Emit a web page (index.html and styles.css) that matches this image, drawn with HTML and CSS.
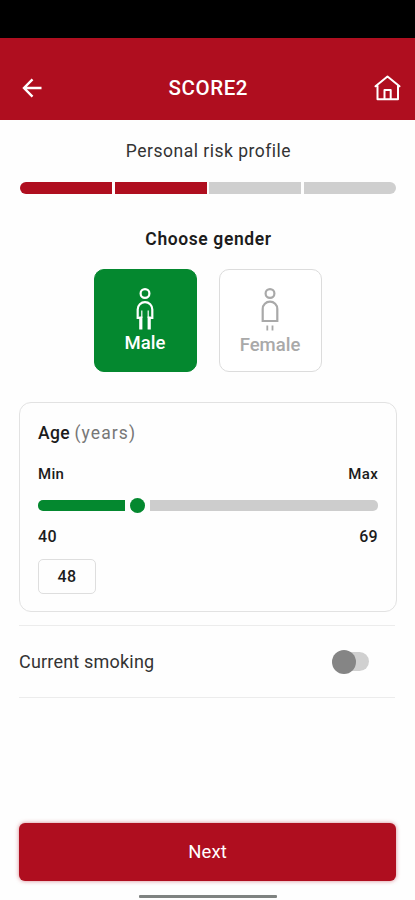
FILE: index.html
```html
<!DOCTYPE html>
<html lang="en">
<head>
<meta charset="utf-8">
<title>SCORE2</title>
<link rel="stylesheet" href="styles.css">
</head>
<body>
<div class="status"></div>
<header class="header">
  <svg class="back" width="22" height="22" viewBox="0 0 22 22" fill="none" stroke="#fff" stroke-width="2.400"><path d="M20.500 11H4M11.500 2.300L3 11l8.500 8.700"/></svg>
  <h1 class="title"><span class="t-title">SCORE2</span></h1>
  <svg class="home" width="28" height="28" viewBox="0 0 28 28" fill="none" stroke="#fff" stroke-width="2" stroke-linejoin="round" stroke-linecap="round"><path d="M2.500 12.300L14.500 2.500l12 9.800M4.500 11.500V25.300H25V11.500M11.500 25V16h6.200V25"/></svg>
</header>
<main class="main">
  <p class="subtitle"><span class="t-sub">Personal risk profile</span></p>
  <div class="progress"><i class="done"></i><i class="done"></i><i></i><i></i></div>
  <h2 class="choose"><span class="t-choose">Choose gender</span></h2>
  <div class="genders">
    <button class="tile selected">
      <svg width="20" height="44" viewBox="0 0 20 44" fill="none" stroke="currentColor" stroke-width="2.200"><circle cx="10" cy="5.500" r="4.400"/><path d="M5.500 30H2.700V21.500a7.300 7.300 0 0 1 14.600 0V30H14.500"/><path d="M5.800 28.500V41.500M14.200 28.500V41.500" stroke-width="3.200"/><path d="M6.800 22.500V30M13.200 22.500V30" stroke-width="1.200"/></svg>
      <span class="t-male">Male</span>
    </button>
    <button class="tile">
      <svg width="20" height="44" viewBox="0 0 20 44" fill="none" stroke="currentColor" stroke-width="2.200"><circle cx="10" cy="5.500" r="4.400"/><path d="M2.700 33V21a7.300 7.300 0 0 1 14.600 0V33Z"/><path d="M7.300 37.500v5M12.500 37.500v5" stroke-width="1.800"/></svg>
      <span class="t-female">Female</span>
    </button>
  </div>
  <section class="card">
    <h3 class="age"><span class="t-age">Age</span> <span class="t-years">(years)</span></h3>
    <div class="row labels"><span class="t-min">Min</span><span class="t-max">Max</span></div>
    <div class="slider"><i class="fill"></i><i class="thumb"></i><i class="rest"></i></div>
    <div class="row values"><span class="t-num">40</span><span class="t-num">69</span></div>
    <div class="value"><span class="t-num">48</span></div>
  </section>
  <div class="smoking">
    <span class="t-smoking">Current smoking</span>
    <div class="toggle"><i class="knob"></i></div>
  </div>
</main>
<footer class="footer">
  <button class="next"><span class="t-next">Next</span></button>
  <div class="homebar"></div>
</footer>
</body>
</html>
```
FILE: styles.css
```css
* { box-sizing: border-box; margin: 0; padding: 0; }
body {
  display: flex; flex-direction: column; height: 900px; overflow: hidden;
  background: #fefefe; color: #1c1c1c; font-family: Roboto, "Liberation Sans", sans-serif;
}
button { font-family: inherit; border: 0; }
.status { height: 37.500px; background: #000; }
.header {
  height: 82.500px; padding: 18px 14px 0 20.500px; background: #af0e1f; color: #fff;
  display: grid; grid-template-columns: 28px 1fr 28px; align-items: center;
}
.title { text-align: center; font-size: 20.500px; line-height: 24px; font-weight: 500; padding-right: 5px; }
.main { padding: 19px 19px 0; }
.subtitle { height: 24px; line-height: 24px; padding-left: 2px; text-align: center; font-size: 17.500px; color: #333; }
.progress { display: flex; gap: 2.500px; height: 12px; margin: 19px 0 0 1px; border-radius: 6px; overflow: hidden; }
.progress i { flex: 1; background: #cfcfcf; }
.progress .done { background: #af0e1f; }
.choose { height: 24px; margin-top: 33px; padding-left: 2px; line-height: 24px; text-align: center; font-size: 17.500px; font-weight: 600; }
.genders { display: flex; justify-content: center; gap: 22px; margin-top: 18px; }
.tile {
  width: 103px; height: 103px; padding-top: 18px; border: 1px solid #dcdcdc; border-radius: 10px;
  background: #fff; color: #a9a9a9; display: flex; flex-direction: column; align-items: center;
  font-size: 18.500px; line-height: 22px; font-weight: 500;
}
.tile span { margin-top: 2px; }
.tile.selected { background: #04882f; border-color: #04882f; color: #fff; }
.tile.selected span { margin-top: 0; }
.card { height: 210px; margin: 30px -1px 0 0; padding: 19px 18px 0; border: 1.500px solid #e2e2e2; border-radius: 12px; }
.age { font-size: 17.500px; line-height: 22px; font-weight: 500; }
.t-years { color: #777; font-weight: 400; }
.row { display: flex; justify-content: space-between; font-weight: 500; line-height: 20px; }
.labels { margin-top: 20px; font-size: 15px; }
.slider { display: flex; align-items: center; margin-top: 14px; height: 15px; }
.fill { width: 87px; height: 11px; background: #04882f; border-radius: 5px 0 0 5px; }
.thumb { width: 15px; height: 15px; margin: 0 5px; border-radius: 50%; background: #04882f; }
.rest { flex: 1; height: 11px; background: #cdcdcd; border-radius: 0 5px 5px 0; }
.values { margin-top: 14px; font-size: 16px; }
.value { width: 58px; height: 35px; margin-top: 12px; border: 1.500px solid #dedede; border-radius: 5px; text-align: center; line-height: 33px; font-size: 16px; font-weight: 500; }
.smoking {
  height: 73px; margin: 13px 1px 0 0; padding-right: 26px; border: solid #ececec; border-width: 1px 0;
  display: flex; justify-content: space-between; align-items: center; font-size: 18px; color: #333;
}
.toggle { width: 37px; height: 24px; display: flex; align-items: center; position: relative; }
.toggle::before { content: ""; width: 33px; height: 19px; margin-left: 4px; border-radius: 10px; background: #d0d0d0; }
.knob { position: absolute; left: 0; top: 0; width: 24px; height: 24px; border-radius: 50%; background: #858585; }
.footer { margin-top: auto; padding: 0 19px 2px; }
.next {
  display: block; width: 377px; height: 58px; border-radius: 6px; background: #af0e1f; color: #fff;
  font-size: 18.500px; box-shadow: 0 0 4px rgba(175, 14, 31, .5);
}
.homebar { width: 138px; height: 3px; margin: 14px auto 0; background: #7e8280; border-radius: 1px; }
.t-title { letter-spacing: .6px; }
.t-sub { letter-spacing: .5px; }
.t-choose { letter-spacing: .6px; }
.t-age { letter-spacing: .4px; }
.t-years { letter-spacing: 1.100px; }
.t-min, .t-max { letter-spacing: .3px; }
.t-num { letter-spacing: .3px; }
.t-smoking { letter-spacing: .2px; }
.t-next { letter-spacing: .1px; }
```
